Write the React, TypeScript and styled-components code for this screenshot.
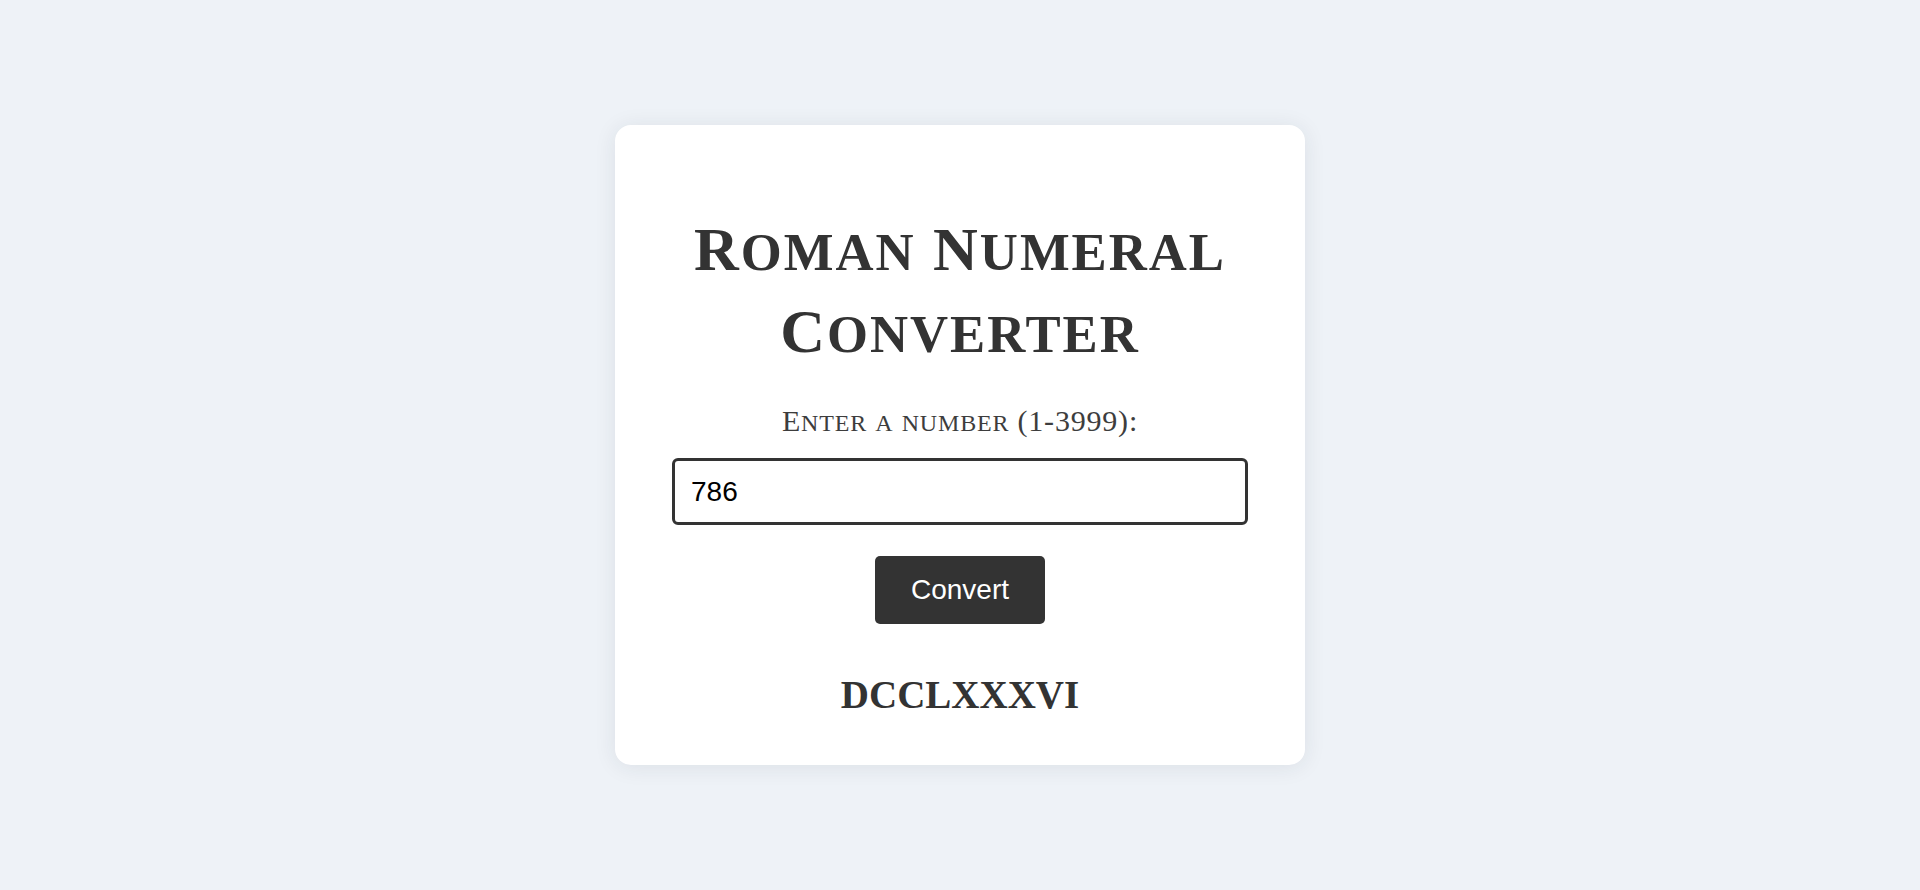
import React from "react";
import styled, { createGlobalStyle } from "styled-components";

const GlobalStyle = createGlobalStyle`
  html, body {
    margin: 0;
    padding: 0;
    background: #eef2f7;
  }
  * { box-sizing: border-box; }
`;

const Page = styled.main`
  min-height: 890px;
  display: flex;
  align-items: center;
  justify-content: center;
`;

const Card = styled.section`
  width: 690px;
  background: #ffffff;
  border-radius: 16px;
  box-shadow: 0 2px 22px rgba(30, 40, 60, 0.09);
  padding: 83px 57px 48px;
  display: flex;
  flex-direction: column;
  align-items: center;
  text-align: center;
`;

const Title = styled.h1`
  margin: 0;
  font-family: "Liberation Serif", "Times New Roman", serif;
  font-weight: 700;
  font-size: 62px;
  line-height: 82px;
  letter-spacing: 2px;
  color: #333333;
`;

const Label = styled.label`
  margin-top: 32px;
  font-family: "Liberation Serif", "Times New Roman", serif;
  font-weight: 400;
  font-size: 30px;
  line-height: 34px;
  letter-spacing: 0.8px;
  color: #3d3d3d;
`;

const Lower = styled.span<{ $ratio: number }>`
  text-transform: uppercase;
  font-size: ${(p) => p.$ratio}em;
  line-height: 1;
`;

const Input = styled.input`
  margin-top: 20px;
  width: 100%;
  height: 67px;
  padding: 0 16px;
  border: 3px solid #333333;
  border-radius: 6px;
  font-family: "Liberation Sans", Arial, sans-serif;
  font-size: 28px;
  color: #000000;
  background: #ffffff;
  outline: none;
`;

const Button = styled.button`
  margin-top: 31px;
  padding: 0 36px;
  height: 68px;
  border: none;
  border-radius: 5px;
  background: #333333;
  color: #ffffff;
  font-family: "Liberation Sans", Arial, sans-serif;
  font-size: 28px;
  cursor: pointer;
`;

const Result = styled.div`
  margin-top: 48px;
  font-family: "Liberation Serif", "Times New Roman", serif;
  font-weight: 700;
  font-size: 39px;
  line-height: 45px;
  color: #333333;
`;

function SmallCaps({ text, ratio }: { text: string; ratio: number }) {
  const parts = text.split(/([a-z]+)/);
  return (
    <>
      {parts.map((part, i) =>
        /^[a-z]+$/.test(part) ? (
          <Lower key={i} $ratio={ratio}>
            {part}
          </Lower>
        ) : (
          <React.Fragment key={i}>{part}</React.Fragment>
        )
      )}
    </>
  );
}

export default function App() {
  return (
    <>
      <GlobalStyle />
      <Page>
        <Card>
          <Title>
            <SmallCaps text="Roman Numeral" ratio={0.85} />
            <br />
            <SmallCaps text="Converter" ratio={0.85} />
          </Title>
          <Label htmlFor="number">
            <SmallCaps text="Enter a number (1-3999):" ratio={0.8} />
          </Label>
          <Input id="number" type="text" defaultValue="786" />
          <Button type="button">Convert</Button>
          <Result>DCCLXXXVI</Result>
        </Card>
      </Page>
    </>
  );
}
